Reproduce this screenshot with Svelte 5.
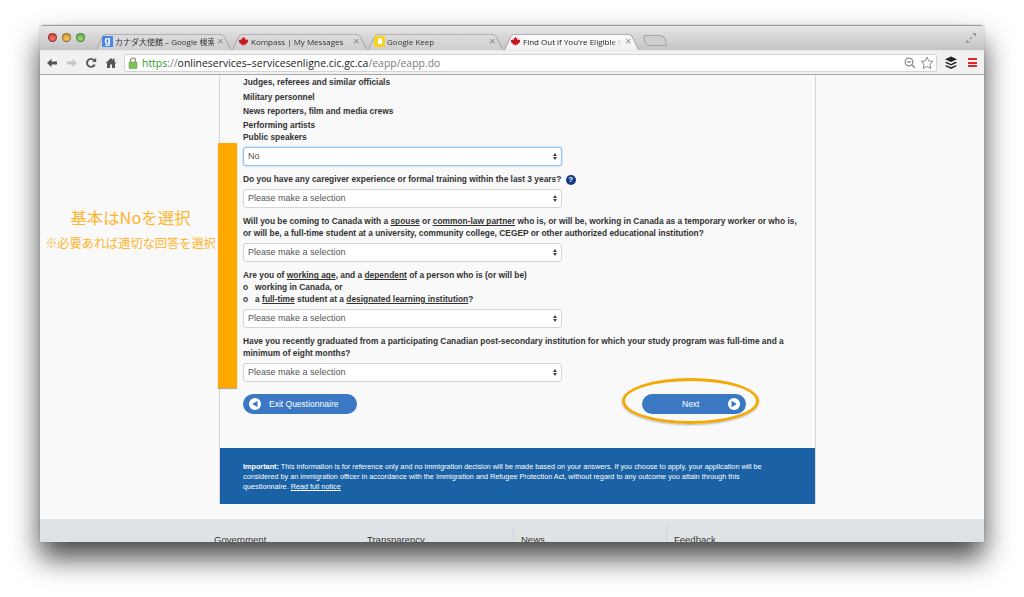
<script>
	const leaf = 'M8 1 L9.2 3.4 L10.6 2.8 L10.2 6 L12 4.4 L12.5 5.8 L15 5.4 L14.2 8 L15 8.6 L11.6 11.4 L12 12.8 L8.4 12.3 L8.4 15 L7.6 15 L7.6 12.3 L4 12.8 L4.4 11.4 L1 8.6 L1.8 8 L1 5.4 L3.5 5.8 L4 4.4 L5.8 6 L5.4 2.8 L6.8 3.4 Z';

	const tabs = [
		{ title: 'カナダ大使館 – Google 検索', icon: 'google' },
		{ title: 'Kompass | My Messages', icon: 'leaf' },
		{ title: 'Google Keep', icon: 'keep' },
		{ title: "Find Out if You're Eligible to", icon: 'leaf', active: true }
	];

	const questions = [
		{ html: 'Do you have any caregiver experience or formal training within the last 3 years?', help: true },
		{
			html: 'Will you be coming to Canada with a <u>spouse</u> or <u>common-law partner</u> who is, or will be, working in Canada as a temporary worker or who is, or will be, a full-time student at a university, community college, CEGEP or other authorized educational institution?'
		},
		{
			html: 'Are you of <u>working age</u>, and a <u>dependent</u> of a person who is (or will be)<br>o&nbsp;&nbsp;&nbsp;working in Canada, or<br>o&nbsp;&nbsp;&nbsp;a <u>full-time</u> student at a <u>designated learning institution</u>?'
		},
		{
			html: 'Have you recently graduated from a participating Canadian post-secondary institution for which your study program was full-time and a minimum of eight months?'
		}
	];
</script>

<div class="desk">
	<div class="window">
		<div class="tabstrip">
			<div class="lights">
				<span class="light red"></span>
				<span class="light yellow"></span>
				<span class="light green"></span>
			</div>
			<div class="tabs">
				{#each tabs as tab}
					<div class="tab" class:active={tab.active}>
						{#if tab.icon === 'google'}
							<span class="fav google">g</span>
						{:else if tab.icon === 'keep'}
							<span class="fav keep"><i></i></span>
						{:else}
							<svg class="fav" viewBox="0 0 16 16"><path d={leaf} fill="#c8161d" /></svg>
						{/if}
						<span class="tab-title">{tab.title}</span>
						<span class="tab-x">×</span>
					</div>
				{/each}
				<div class="newtab"></div>
			</div>
			<svg class="fullscreen" viewBox="0 0 12 12" width="12" height="12">
				<path d="M7 1h4v4zM1 7v4h4zM6.500 4.500l1 1-2 2-1-1z" fill="#9a9a9a" />
			</svg>
		</div>

		<div class="toolbar">
			<svg class="nav" viewBox="0 0 12 12"><path d="M1 6l4.500-4.200v2.700H11v3H5.500v2.700z" fill="#555" /></svg>
			<svg class="nav" viewBox="0 0 12 12"><path d="M11 6L6.500 1.800v2.700H1v3h5.500v2.700z" fill="#c6c6c6" /></svg>
			<svg class="nav reload" viewBox="0 0 12 12">
				<path d="M9.700 7.500A4 4 0 1 1 9 3.200" fill="none" stroke="#555" stroke-width="1.900" />
				<path d="M7 4.800L11.200 5V.8z" fill="#555" />
			</svg>
			<svg class="nav" viewBox="0 0 12 12"><path d="M6 1L.5 6.300H2V11h3V7.500h2V11h3V6.300h1.500L9.500 4.400V1.500H8v1.400z" fill="#555" /></svg>
			<div class="omnibox">
				<svg class="lock" viewBox="0 0 10 12" width="10" height="12">
					<path d="M2.500 5V3.500a2.500 2.500 0 0 1 5 0V5" fill="none" stroke="#888" stroke-width="1.200" />
					<rect x="1" y="5" width="8" height="6.500" rx="1" fill="#7cc35a" stroke="#5a9c3c" stroke-width=".6" />
				</svg>
				<span class="url"><span class="https">https</span><span class="scheme">://</span>onlineservices–servicesenligne.cic.gc.ca<span class="path">/eapp/eapp.do</span></span>
				<svg class="omni-icon" viewBox="0 0 12 12" width="12" height="12">
					<circle cx="5" cy="5" r="3.800" fill="none" stroke="#8d8d8d" stroke-width="1.300" />
					<path d="M3.300 5h3.400M8 8l3 3" stroke="#8d8d8d" stroke-width="1.300" />
				</svg>
				<svg class="omni-icon" viewBox="0 0 14 14" width="14" height="14">
					<path d="M7 1l1.800 3.900 4.200.5-3.100 2.900.8 4.200L7 10.400 3.300 12.500l.8-4.200L1 5.400l4.200-.5z" fill="#fff" stroke="#8a8a8a" />
				</svg>
			</div>
			<svg class="ext" viewBox="0 0 14 14" width="14" height="14">
				<path d="M7 .5l6 2.800-6 2.800-6-2.800z" fill="#222" />
				<path d="M2.500 5.800L7 7.900l4.500-2.100L13 6.700 7 9.500 1 6.700z" fill="#222" />
				<path d="M2.500 9.200L7 11.300l4.500-2.100 1.500.9-6 2.800-6-2.800z" fill="#222" />
			</svg>
			<div class="menu"><i></i><i></i><i></i></div>
		</div>

		<div class="page">
			<div class="sheet">
				<div class="form">
					<div class="list">
						<p class="first">Judges, referees and similar officials</p>
						<p>Military personnel</p>
						<p>News reporters, film and media crews</p>
						<p class="tight">Performing artists</p>
						<p>Public speakers</p>
					</div>
					<div class="select focus"><span class="value">No</span><span class="updown"></span></div>

					{#each questions as q}
						<div class="label">
							{@html q.html}
							{#if q.help}<span class="help">?</span>{/if}
						</div>
						<div class="select"><span>Please make a selection</span><span class="updown"></span></div>
					{/each}

					<div class="buttons">
						<div class="btn exit">
							<span class="round"><svg viewBox="0 0 8 8" width="8" height="8"><path d="M6.500 .8v6.400L1.200 4z" fill="#3a78c4" /></svg></span>
							Exit Questionnaire
						</div>
						<div class="btn next">
							Next
							<span class="round"><svg viewBox="0 0 8 8" width="8" height="8"><path d="M1.500 .8v6.400L6.800 4z" fill="#3a78c4" /></svg></span>
						</div>
					</div>
				</div>

				<div class="notice">
					<b>Important:</b> This information is for reference only and no immigration decision will be made based on your answers. If you choose to apply, your application will be considered by an immigration officer in accordance with the Immigration and Refugee Protection Act, without regard to any outcome you attain through this questionnaire. <u>Read full notice</u>
				</div>
			</div>

			<div class="footer">
				<div class="fcol">Government</div>
				<div class="fcol narrow">Transparency</div>
				<div class="fcol sep">News</div>
				<div class="fcol sep">Feedback</div>
			</div>

			<!-- annotations drawn on top of the page -->
			<div class="orange-bar"></div>
			<div class="note">
				<div class="note-big">基本はNoを選択</div>
				<div class="note-small">※必要あれば適切な回答を選択</div>
			</div>
			<div class="ring"></div>
		</div>
	</div>
</div>

<style>
	:global(body) {
		background: #fff;
		font-family: 'Liberation Sans', Arial, sans-serif;
	}

	.desk {
		height: 597px;
		box-sizing: border-box;
		padding: 25px 40px 55px;
		overflow: hidden;
	}

	.window {
		height: 517px;
		display: flex;
		flex-direction: column;
		border-radius: 4px 4px 2px 2px;
		box-shadow: 0 0 1px #555, 0 16px 28px rgba(0, 0, 0, 0.72);
		overflow: hidden;
	}

	.tabstrip {
		height: 25px;
		flex: none;
		display: flex;
		align-items: flex-end;
		position: relative;
		background: linear-gradient(#e6e6e6, #c4c4c4);
		border-top: 1px solid #9d9d9d;
		box-sizing: border-box;
	}

	.lights {
		display: flex;
		gap: 5px;
		padding: 0 0 8px 8px;
		width: 55px;
		box-sizing: border-box;
	}

	.light {
		width: 9px;
		height: 9px;
		border-radius: 50%;
		border: 0.5px solid rgba(0, 0, 0, 0.35);
		box-sizing: border-box;
	}

	.red { background: radial-gradient(circle at 50% 70%, #f47a74, #c9302c); }
	.yellow { background: radial-gradient(circle at 50% 70%, #f6cd6c, #c98a1f); }
	.green { background: radial-gradient(circle at 50% 70%, #a6dc82, #5da33c); }

	.tabs {
		display: flex;
		align-items: flex-end;
		flex: 1;
	}

	.tab {
		width: 136px;
		height: 18px;
		box-sizing: border-box;
		position: relative;
		display: flex;
		align-items: center;
		padding: 0 6px 0 7px;
		gap: 2px;
		font-size: 8px;
		color: #333;
		font-family: 'Open Sans', 'Noto Sans CJK JP', sans-serif;
		z-index: 0;
	}

	.tab::before {
		content: '';
		position: absolute;
		inset: 0 0 0 1px;
		background: linear-gradient(#dcdcdc, #cfcfcf);
		border: 1px solid #a5a5a5;
		border-bottom: 0;
		border-radius: 3px 3px 0 0;
		transform: perspective(30px) rotateX(12deg);
		transform-origin: bottom;
		z-index: -1;
	}

	.tab.active::before {
		background: linear-gradient(#fbfbfb, #f1f1f1);
	}

	.tab.active {
		color: #222;
		z-index: 1;
	}

	.fav {
		width: 11px;
		height: 11px;
		flex: none;
	}

	.google {
		background: #4a86e8;
		color: #fff;
		font: bold 10px/10px 'Liberation Sans', sans-serif;
		text-align: center;
	}

	.keep {
		background: #f5d327;
		display: flex;
		align-items: center;
		justify-content: center;
	}

	.keep i {
		width: 4px;
		height: 6px;
		border-radius: 2px 2px 1px 1px;
		background: #fff;
	}

	.tab-title {
		flex: 1;
		white-space: nowrap;
		overflow: hidden;
		min-width: 0;
	}

	.active .tab-title {
		-webkit-mask-image: linear-gradient(90deg, #000 88%, transparent);
		mask-image: linear-gradient(90deg, #000 88%, transparent);
	}

	.tab-x {
		color: #888;
		font-size: 11px;
		width: 9px;
		line-height: 10px;
		text-align: center;
	}

	.newtab {
		width: 20px;
		height: 9px;
		margin: 0 0 4px 5px;
		background: #cfcfcf;
		border: 1px solid #a5a5a5;
		border-radius: 3px 5px 2px 4px;
		transform: skewX(14deg);
	}

	.fullscreen {
		align-self: center;
		margin-right: 7px;
	}

	.toolbar {
		height: 25px;
		flex: none;
		display: flex;
		align-items: center;
		box-sizing: border-box;
		padding: 0 6px;
		background: #f1f1f1;
		border-top: 1px solid #e8e8e8;
		border-bottom: 1px solid #a8a8a8;
		gap: 5px;
	}

	.nav {
		width: 12px;
		height: 12px;
		flex: none;
		margin-right: 3px;
	}

	.reload {
		margin-left: -1px;
	}

	.omnibox {
		flex: 1;
		height: 18px;
		background: #fff;
		border: 1px solid #d4d4d4;
		border-radius: 2px;
		display: flex;
		align-items: center;
		padding: 0 2px 0 3px;
		gap: 4px;
		margin-left: -1px;
		box-sizing: border-box;
	}

	.url {
		flex: 1;
		font-family: 'Open Sans', sans-serif;
		font-size: 10.450px;
		color: #222;
		white-space: nowrap;
	}

	.https { color: #2e9a1f; }
	.scheme, .path { color: #7c7c7c; }

	.ext {
		margin: 0 5px 0 2px;
		flex: none;
	}

	.menu {
		width: 9px;
		display: flex;
		flex-direction: column;
		gap: 1.500px;
		margin-right: 1px;
		flex: none;
	}

	.menu i {
		height: 2px;
		background: #d8292f;
	}

	.page {
		flex: 1;
		background: #f9f9f9;
		position: relative;
		display: flex;
		flex-direction: column;
		overflow: hidden;
		color: #333;
	}

	.sheet {
		width: 597px;
		margin-left: 179px;
		box-sizing: border-box;
		border-left: 1px solid #d8d8d8;
		border-right: 1px solid #d8d8d8;
		height: 429px;
		flex: none;
		display: flex;
		flex-direction: column;
		justify-content: space-between;
	}

	.form {
		padding-left: 23px;
	}

	.list {
		font-size: 8.400px;
		font-weight: bold;
		padding-top: 2px;
	}

	.list p {
		margin: 0 0 4px;
		line-height: 10px;
	}

	.list p.first {
		margin-bottom: 5px;
	}

	.list p.tight {
		margin-bottom: 2px;
	}

	.list p:last-child {
		margin-bottom: 4.500px;
	}

	.select {
		width: 319px;
		height: 19px;
		box-sizing: border-box;
		background: #fff;
		border: 1px solid #d5d5d5;
		border-radius: 3px;
		display: flex;
		align-items: center;
		justify-content: space-between;
		padding: 0 4px;
		font-size: 9px;
		color: #555;
	}

	.select.focus {
		border-color: #8fc1ee;
		box-shadow: 0 0 2px #8fc1ee;
	}

	.updown {
		width: 3px;
		height: 7px;
		position: relative;
	}

	.updown::before,
	.updown::after {
		content: '';
		position: absolute;
		left: -1px;
		border-left: 2.500px solid transparent;
		border-right: 2.500px solid transparent;
	}

	.updown::before {
		top: 0;
		border-bottom: 3px solid #444;
	}

	.updown::after {
		bottom: 0;
		border-top: 3px solid #444;
	}

	.label {
		width: 560px;
		font-size: 8.400px;
		font-weight: bold;
		line-height: 11.800px;
		margin: 8.500px 0 3px;
	}

	.help {
		display: inline-block;
		width: 10px;
		height: 10px;
		line-height: 10px;
		margin-left: 2px;
		border-radius: 50%;
		background: #123a86;
		color: #fff;
		text-align: center;
		font-size: 8px;
	}

	.buttons {
		display: flex;
		justify-content: space-between;
		width: 503px;
		margin-top: 12.500px;
	}

	.btn {
		height: 20px;
		background: #3a78c4;
		color: #fff;
		border-radius: 10px;
		display: flex;
		align-items: center;
		font-size: 8.500px;
		box-sizing: border-box;
	}

	.exit {
		width: 114px;
		padding-left: 6px;
		gap: 8px;
	}

	.next {
		width: 104px;
		padding: 0 6px 0 40px;
		justify-content: space-between;
	}

	.round {
		width: 12px;
		height: 12px;
		background: #fff;
		border-radius: 50%;
		display: flex;
		align-items: center;
		justify-content: center;
	}

	.notice {
		height: 56px;
		box-sizing: border-box;
		background: #1a62a5;
		color: #fff;
		font-size: 7.280px;
		line-height: 10px;
		padding: 14px 40px 0 23px;
	}

	.footer {
		flex: 1;
		margin-top: 15px;
		background: #e0e3e6;
		display: flex;
		padding-left: 174px;
		font-size: 9.500px;
		color: #333;
	}

	.fcol {
		width: 153px;
		padding-top: 15px;
		box-sizing: border-box;
	}

	.fcol.narrow {
		width: 146px;
	}

	.fcol.sep {
		border-left: 1px solid #d0d3d6;
		padding-left: 7px;
		margin-top: 6px;
		padding-top: 9px;
	}

	.orange-bar {
		position: absolute;
		left: 178px;
		top: 68px;
		width: 19px;
		height: 245px;
		background: #ffa900;
		box-shadow: 0 1px 1px rgba(0, 0, 0, 0.3);
	}

	.note {
		position: absolute;
		left: 0;
		top: 132px;
		width: 181px;
		text-align: center;
		color: #ffb52e;
		font-family: 'Noto Sans CJK JP', sans-serif;
	}

	.note-big {
		font-size: 16.400px;
		line-height: 20px;
	}

	.note-small {
		font-size: 12.200px;
		line-height: 16px;
		margin-top: 8px;
		white-space: nowrap;
	}

	.ring {
		position: absolute;
		left: 582px;
		top: 303px;
		width: 137px;
		height: 46px;
		box-sizing: border-box;
		border: 3px solid #f5a800;
		border-radius: 50%;
		box-shadow: 0 1px 2px rgba(0, 0, 0, 0.3);
	}
</style>
